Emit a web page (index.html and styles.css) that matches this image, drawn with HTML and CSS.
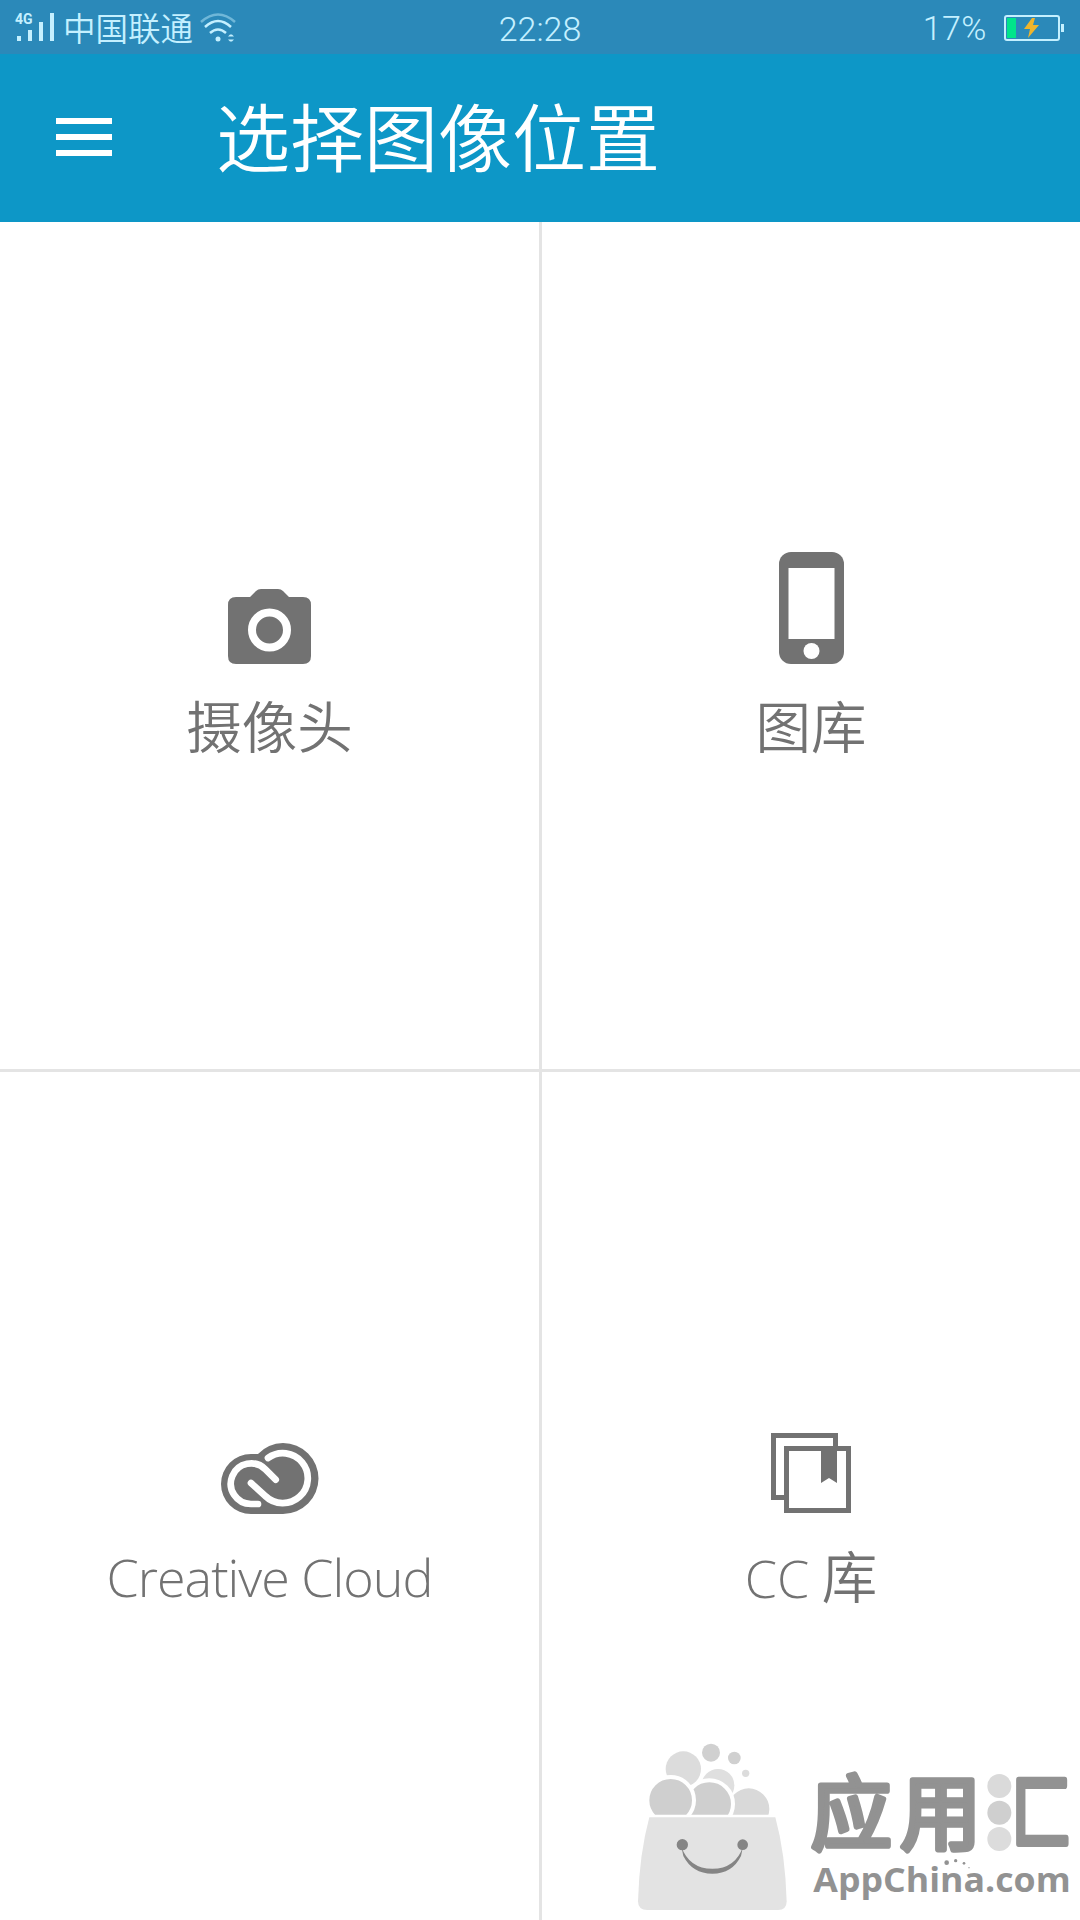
FILE: index.html
```html
<!DOCTYPE html>
<html lang="zh-CN">
  <head>
    <meta charset="UTF-8" />
    <meta name="viewport" content="width=device-width, initial-scale=1" />
    <title>选择图像位置</title>
    <link rel="stylesheet" href="styles.css">
  </head>

  <body>
    <div class="status-bar">
      <div class="status-left">
        <svg class="signal" width="40" height="32" viewBox="0 0 40 32">
          <text x="-1" y="12" class="network">4G</text>
          <path d="M1 24h4v5H1zM12 18h4v11h-4zM23 10h4v19h-4zM34 1h4v28h-4z" />
        </svg>
        <span class="carrier">中国联通</span>
        <svg class="wifi" width="38" height="32" viewBox="0 0 38 32">
          <path class="faint" d="M2 10Q19-5 36 10" />
          <path d="M6 15Q19 3 32 15M11 21q8-7 16 0" />
          <circle cx="19" cy="27" r="2.5" />
          <path class="arrows" d="M29 24.500l2-2h2l2 2zM29 27.500h6l-2 2h-2z" />
        </svg>
      </div>
      <span class="clock">22:28</span>
      <div class="status-right">
        <span class="percent">17%</span>
        <svg class="battery" width="60" height="26" viewBox="0 0 60 26">
          <rect class="shell" x="1" y="1" width="54" height="24" rx="2" />
          <rect class="level" x="3" y="3" width="9" height="20" />
          <rect class="nub" x="57" y="9" width="3" height="8" />
          <path class="bolt" d="M28 3L20 14h6l-2 9 11-13h-6l2-7z" />
        </svg>
      </div>
    </div>

    <header class="app-bar">
      <div class="menu">
        <span></span>
        <span></span>
        <span></span>
      </div>
      <h1>选择图像位置</h1>
    </header>

    <main class="sources">
      <div class="source">
        <div class="icon">
          <svg width="83" height="75" viewBox="0 0 83 75" preserveAspectRatio="none">
            <path d="M22 8L28 2q2-2 5-2h17q3 0 5 2l6 6h14q8 0 8 8v51q0 8-8 8H8q-8 0-8-8V16q0-8 8-8z" />
            <circle class="ring" cx="41.500" cy="41" r="17.500" />
          </svg>
        </div>
        <span class="label">摄像头</span>
      </div>

      <div class="source">
        <div class="icon">
          <svg width="65" height="112" viewBox="0 0 65 112">
            <rect width="65" height="112" rx="12" />
            <rect class="paper" x="9.500" y="16" width="46" height="71" />
            <circle class="paper" cx="32.500" cy="99" r="8" />
          </svg>
        </div>
        <span class="label">图库</span>
      </div>

      <div class="source">
        <div class="icon">
          <svg width="98" height="71" viewBox="0 0 98 71">
            <path d="M30 71a30 30 0 0 1 0-60h7A36 36 0 0 1 62 0a35.500 35.500 0 0 1 0 71z" />
            <path class="loop" d="M37 61H30A20.300 20.300 0 1 1 44.400 26.300L54.700 36.700M30 40L44.300 53A25 25 0 1 0 47 15" />
          </svg>
        </div>
        <span class="label latin">Creative Cloud</span>
      </div>

      <div class="source">
        <div class="icon">
          <svg width="80" height="81" viewBox="0 0 80 81">
            <path class="frame" d="M13 64.500H2.500v-62h62V13M15.500 15.500h62v62h-62z" />
            <path d="M50 15h16v35l-8-5-8 5z" />
          </svg>
        </div>
        <span class="label"><span class="latin">CC</span> 库</span>
      </div>
    </main>

    <!-- store watermark, bottom right corner -->
    <svg class="watermark" width="460" height="200" viewBox="0 0 1380 600">
      <g class="bubbles">
        <circle cx="273" cy="98" r="27" fill="#d0d0d0" />
        <circle cx="343" cy="114" r="19" fill="#d0d0d0" />
        <circle cx="377" cy="160" r="11" fill="#dcdcdc" />
        <circle cx="294" cy="196" r="49" fill="#dfdfdf" />
        <circle cx="190" cy="147" r="53" fill="#dcdcdc" />
        <circle cx="386" cy="267" r="62" fill="#d9d9d9" />
        <circle class="cut" cx="268" cy="252" r="71" fill="#cfcfcf" />
        <circle class="cut" cx="152" cy="241" r="70" fill="#cfcfcf" />
      </g>
      <path class="paper" d="M50 284h450v60H50z" />
      <path fill="#e3e3e3" d="M88 292h378q30 110 34 252 0 26-26 26H82q-28 0-28-26 4-142 34-252z" />
      <path fill="#858585" d="M184 380q24 66 93 66t92-66l-6 28q-26 53-86 53t-87-53z" />
      <circle cx="187" cy="374" r="17" fill="#858585" />
      <circle cx="368" cy="374" r="16" fill="#858585" />

      <text class="brand" x="573" y="369" textLength="510">应用</text>
      <circle cx="1138" cy="198" r="36" fill="#dadada" />
      <circle cx="1138" cy="278" r="36" fill="#cfcfcf" />
      <circle cx="1138" cy="357" r="36" fill="#dcdcdc" />
      <text class="brand box" transform="translate(1174 365) scale(.75 1)" x="0" y="0">匚</text>

      <text class="site" x="580" y="515" textLength="772" lengthAdjust="spacingAndGlyphs">AppChina.com</text>
      <g fill="#929292">
        <circle cx="980" cy="428" r="7" />
        <circle cx="1007" cy="422" r="5" />
        <circle cx="1032" cy="430" r="4" />
        <circle cx="1047" cy="443" r="2" />
      </g>
    </svg>
  </body>
</html>
```
FILE: styles.css
```css
:root {
  --status-bg: #2b89b9;
  --bar-bg: #0d97c7;
  --status-text: #c4f0ff;
  --line: #e4e4e4;
  --grey: #727272;
}

* {
  box-sizing: border-box;
}

body {
  margin: 0;
  height: 1920px;
  display: flex;
  flex-direction: column;
  position: relative;
  overflow: hidden;
  background: #fff;
  color: var(--grey);
  font-family: "Noto Sans CJK SC", sans-serif;
  font-weight: 350;
}

svg {
  display: block;
}

/* status bar */
.status-bar {
  height: 54px;
  display: grid;
  grid-template-columns: 1fr auto 1fr;
  align-items: center;
  padding: 0 16px;
  background: var(--status-bg);
  color: var(--status-text);
  fill: var(--status-text);
  line-height: 52px;
}

.status-left,
.status-right {
  display: flex;
  align-items: center;
}

.status-right {
  justify-content: flex-end;
}

.signal {
  overflow: visible;
}

.network {
  font: 700 14px Roboto, sans-serif;
}

.carrier {
  height: 54px;
  margin: 0 6px 0 7px;
  font-size: 32.5px;
}

.wifi path {
  fill: none;
  stroke: var(--status-text);
  stroke-width: 2.5;
}

.wifi .faint {
  opacity: 0.45;
}

.wifi .arrows {
  fill: var(--status-text);
  stroke: none;
}

.clock {
  padding-top: 3px;
  font-family: Roboto, sans-serif;
  font-size: 34px;
  font-weight: 350;
}

.percent {
  margin-right: 17px;
  font-family: Roboto, sans-serif;
  font-size: 34px;
  font-weight: 350;
  letter-spacing: 0.5px;
}

.shell {
  fill: none;
  stroke: var(--status-text);
  stroke-width: 2;
}

.level {
  fill: #00e58b;
}

.bolt {
  fill: #efb52d;
}

/* app bar */
.app-bar {
  height: 168px;
  display: flex;
  align-items: center;
  gap: 104px;
  padding: 0 0 2px 56px;
  background: var(--bar-bg);
  color: #fff;
}

.menu {
  width: 56px;
  display: flex;
  flex-direction: column;
  gap: 10px;
}

.menu span {
  height: 6px;
  background: #fff;
}

.app-bar h1 {
  margin: 0 0 6px;
  font-size: 74px;
  font-weight: 350;
  line-height: 1;
}

/* image sources */
.sources {
  flex: 1;
  display: grid;
  grid-template-columns: 539px 1fr;
  grid-template-rows: 847px 1fr;
  gap: 3px;
  background: var(--line);
}

.source {
  display: flex;
  flex-direction: column;
  align-items: center;
  padding-top: 330px;
  background: #fff;
}

.icon {
  height: 112px;
  display: flex;
  align-items: flex-end;
  fill: var(--grey);
}

.paper {
  fill: #fff;
}

.ring {
  fill: none;
  stroke: #fff;
  stroke-width: 8;
}

.loop {
  fill: none;
  stroke: #fff;
  stroke-width: 6.7;
  stroke-linejoin: round;
  stroke-linecap: round;
}

.frame {
  fill: none;
  stroke: var(--grey);
  stroke-width: 5;
}

.label {
  margin-top: 20px;
  font-size: 55.5px;
  line-height: 80px;
  white-space: nowrap;
}

.latin {
  font-family: "Open Sans", sans-serif;
  font-size: 52px;
  font-weight: 300;
}

.label.latin {
  margin-top: 23px;
  letter-spacing: -1px;
}

/* watermark */
.watermark {
  position: absolute;
  right: 0;
  bottom: 0;
}

.cut {
  stroke: #fff;
  stroke-width: 12;
}

.brand {
  fill: #929292;
  stroke: #929292;
  stroke-width: 17;
  stroke-linejoin: round;
  font-size: 242px;
  font-weight: 400;
}

.box {
  stroke-width: 20;
}

.site {
  fill: #929292;
  font-family: "Open Sans", sans-serif;
  font-size: 102px;
  font-weight: 700;
}
```
